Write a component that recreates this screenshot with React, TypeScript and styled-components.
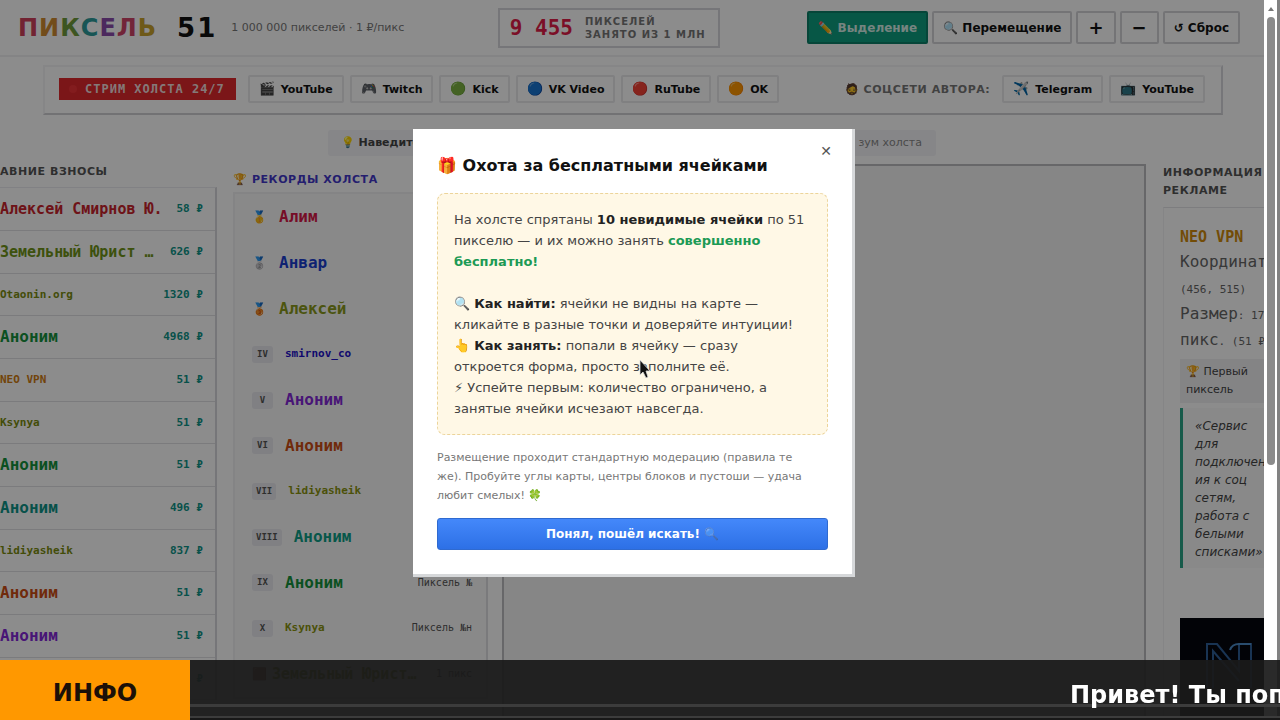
import React from 'react';
import styled, { createGlobalStyle, css } from 'styled-components';

const sans = `"DejaVu Sans", "Noto Sans", sans-serif`;
const mono = `"DejaVu Sans Mono", "Liberation Mono", monospace`;

const Global = createGlobalStyle`
  * { box-sizing: border-box; }
  html, body { margin: 0; height: 100%; overflow: hidden; }
  body { font-family: ${sans}; font-size: 12px; color: #111; background: #fff; }
  h1, h2, p, ul, ol { margin: 0; padding: 0; list-style: none; }
  button { font-family: inherit; cursor: pointer; }
`;

const Page = styled.div`
  height: 100vh;
  display: flex;
  overflow: hidden;
`;
const Content = styled.div`
  position: relative;
  flex: 1;
  min-width: 0;
  overflow: hidden;
`;

/* ---------- header ---------- */
const Header = styled.header`
  display: flex;
  align-items: center;
  justify-content: space-between;
  height: 57px;
  padding: 0 24px 0 18px;
  border-bottom: 2px solid #f0f0f2;
`;
const Brand = styled.div`
  display: flex;
  align-items: center;
  flex: 0 0 392px;
`;
const Logo = styled.h1`
  font-size: 24px;
  line-height: 28px;
  letter-spacing: 1px;
  margin-right: 20px;
`;
const Letter = styled.span<{ $c: string }>`
  color: ${p => p.$c};
`;
const LogoNumber = styled.span`
  font-size: 26px;
  line-height: 28px;
  font-weight: 700;
  letter-spacing: 2px;
  margin-right: 14px;
  color: #111;
`;
const Slogan = styled.span`
  font-size: 11px;
  color: #777;
  white-space: nowrap;
`;
const Counter = styled.div`
  display: flex;
  align-items: center;
  gap: 12px;
  height: 40px;
  padding: 0 12px 0 10px;
  border: 2px solid #d8d8dc;
  font-size: 10px;
  line-height: 13px;
  font-weight: 700;
  letter-spacing: 1px;
  color: #777;
  white-space: nowrap;
`;
const CounterValue = styled.strong`
  font: 700 21px/24px ${mono};
  letter-spacing: 0;
  color: #e11d48;
`;
const Tools = styled.div`
  display: flex;
  gap: 4px;
`;
const ToolButton = styled.button<{ $active?: boolean; $icon?: boolean }>`
  height: 33px;
  padding: 0 ${p => (p.$icon ? 10 : 9)}px;
  border: 2px solid #d4d4d8;
  border-radius: 2px;
  background: #fff;
  color: #111;
  font-size: ${p => (p.$icon ? 18 : 12)}px;
  font-weight: 700;
  line-height: 16px;
  white-space: nowrap;
  ${p => p.$active && css`
    background: #0d9f80;
    border-color: #0b8068;
    color: #d8f0ea;
  `}
`;

/* ---------- links strip ---------- */
const Strip = styled.section`
  display: flex;
  align-items: center;
  justify-content: space-between;
  height: 50px;
  margin: 8px 41px 0 43px;
  padding: 0 16px 2px 14px;
  border: 2px solid #f4f4f6;
  border-right-color: #d8d8dc;
  border-bottom-color: #cfcfd3;
`;
const LinkGroup = styled.nav`
  display: flex;
  align-items: center;
  gap: 6px;
`;
const LiveBadge = styled.strong`
  display: flex;
  align-items: center;
  gap: 8px;
  height: 22px;
  margin-right: 6px;
  padding: 0 11px 0 10px;
  background: #e0292d;
  color: #f0dcdc;
  font: 700 12px/16px ${mono};
  letter-spacing: 1px;
`;
const LiveDot = styled.i`
  width: 8px;
  height: 8px;
  border-radius: 4px;
  background: #ee3438;
`;
const ChipLink = styled.a`
  display: flex;
  align-items: center;
  gap: 6px;
  height: 28px;
  padding: 0 9px;
  border: 2px solid #e9e9ec;
  border-radius: 2px;
  color: #111;
  font-size: 11px;
  font-weight: 700;
  text-decoration: none;
  white-space: nowrap;
`;
const Emoji = styled.span`
  font-size: 13px;
  line-height: 16px;
`;
const StripLabel = styled.span`
  margin-right: 6px;
  color: #777;
  font-size: 11px;
  font-weight: 700;
  letter-spacing: 0.05em;
  white-space: nowrap;
`;

/* ---------- hint ---------- */
const Hint = styled.p`
  display: flex;
  justify-content: space-between;
  width: 608px;
  height: 26px;
  margin: 15px auto 0;
  padding: 0 14px 0 13px;
  background: #f4f4f8;
  border-radius: 3px;
  color: #888;
  font-size: 11px;
  line-height: 26px;
  b { color: #444; }
`;

/* ---------- main columns ---------- */
const Columns = styled.main`
  display: flex;
  align-items: flex-start;
  margin-top: 8px;
`;
const Donations = styled.section`
  flex: 0 0 217px;
`;
const ColumnTitle = styled.h2<{ $blue?: boolean }>`
  height: ${p => (p.$blue ? 28 : 23)}px;
  color: ${p => (p.$blue ? '#4338ca' : '#555')};
  font-size: 11px;
  line-height: ${p => (p.$blue ? 32 : 16)}px;
  letter-spacing: 0.05em;
  white-space: nowrap;
`;
const DonationList = styled.ul`
  border-right: 2px solid #d8d8dc;
  border-top: 1px solid #ececf0;
`;
const DonationRow = styled.li`
  display: flex;
  align-items: center;
  justify-content: space-between;
  height: 43px;
  padding-right: 12px;
  border-bottom: 1px solid #e0e0e4;
  &:nth-child(3n) { height: 42px; }
`;
const Name = styled.span<{ $c: string; $size: number }>`
  color: ${p => p.$c};
  font: 700 ${p => p.$size}px/20px ${mono};
  white-space: pre;
`;
const Sum = styled.span`
  color: #0d9488;
  font: 700 11px/20px ${mono};
`;
const Records = styled.section`
  flex: 0 0 255px;
  margin-left: 16px;
`;
const RecordList = styled.ol`
  padding: 0 14px 0 17px;
  background: #fafafa;
  border: 2px solid #f0f0f3;
  border-right-color: #dedee2;
`;
const RecordRow = styled.li`
  display: flex;
  align-items: center;
  height: 46px;
  &:nth-child(3n) { height: 45px; }
`;
const Medal = styled.span<{ $wide: boolean }>`
  width: ${p => (p.$wide ? 27 : 20)}px;
  font-size: 12px;
  line-height: 20px;
`;
const Rank = styled.span`
  margin-right: 12px;
  min-width: 21px;
  padding: 0 4px;
  border-radius: 3px;
  background: #e9e9ee;
  color: #555;
  text-align: center;
  font: 700 9px/17px ${mono};
`;
const RecordNote = styled.span`
  margin-left: auto;
  color: #555;
  font: 400 10px/16px ${mono};
  white-space: nowrap;
`;
const CanvasBox = styled.div`
  flex: 1;
  min-width: 0;
  height: 640px;
  margin-left: 14px;
  border: 2px solid #bcbcc0;
  background: #f4f4f4;
`;
const Info = styled.aside`
  flex: 0 0 101px;
  margin-left: 17px;
  overflow: hidden;
`;
const InfoTitle = styled.h2`
  width: 140px;
  height: 43px;
  color: #555;
  font-size: 11px;
  line-height: 18px;
  letter-spacing: 0.05em;
`;
const InfoCard = styled.article`
  width: 130px;
  padding: 17px 0 0 16px;
  border-top: 1px solid #e4e4e8;
  border-left: 1px solid #f2f2f5;
`;
const InfoName = styled.h2`
  color: #d08a0c;
  font: 700 15px/24px ${mono};
`;
const InfoText = styled.p`
  color: #666;
  font: 400 16px/26px ${mono};
  white-space: pre;
`;
const Small = styled.span`
  font-size: 11px;
  line-height: 16px;
`;
const FirstBadge = styled.p`
  margin-top: 6px;
  padding: 4px 6px;
  background: #f0f0f3;
  color: #444;
  font-size: 11px;
  line-height: 18px;
  white-space: pre;
`;
const Quote = styled.blockquote`
  margin: 5px 0 50px;
  padding: 9px 0 7px 12px;
  border-left: 3px solid #2aa587;
  background: #fafafa;
  color: #444;
  font-size: 12px;
  font-style: italic;
  line-height: 18px;
  white-space: pre;
`;
const Banner = styled.svg`
  display: block;
  width: 114px;
  height: 100px;
`;

/* ---------- scrollbar ---------- */
const ScrollTrack = styled.div`
  flex: 0 0 16px;
  padding: 0 2px 0 3px;
  background: #fff;
  border-right: 3px solid #828282;
`;
const ScrollArrow = styled.svg`
  display: block;
  width: 8px;
  height: 17px;
`;
const ScrollThumb = styled.div`
  height: 448px;
  border-radius: 4px;
  background: #8b8b8b;
`;

/* ---------- dialog ---------- */
const Overlay = styled.div`
  position: absolute;
  inset: 0;
  background: rgba(0, 0, 0, 0.45);
`;
const DialogLayer = styled.div`
  position: fixed;
  inset: 0;
  display: flex;
  align-items: center;
  justify-content: center;
  padding: 0 12px 14px 0;
`;
const Dialog = styled.section`
  position: relative;
  width: 442px;
  padding: 24px;
  background: #fff;
  border: solid #d6d8da;
  border-width: 0 3px 3px 0;
`;
const Close = styled.button`
  position: absolute;
  top: 10px;
  right: 14px;
  width: 24px;
  height: 24px;
  padding: 0;
  border: 0;
  background: none;
  color: #555;
  font-size: 14px;
  line-height: 22px;
`;
const DialogTitle = styled.h2`
  color: #111;
  font-size: 16px;
  line-height: 26px;
  white-space: nowrap;
`;
const Rules = styled.div`
  margin-top: 14px;
  padding: 15px 16px;
  border: 1px dashed #ecd49a;
  border-radius: 8px;
  background: #fff8e6;
  color: #444;
  font-size: 13px;
  line-height: 21px;
  white-space: nowrap;
  b { color: #222; }
`;
const Free = styled.strong`
  color: #1c9a55;
`;
const Note = styled.p`
  margin-top: 13px;
  color: #777;
  font-size: 11px;
  line-height: 19px;
  white-space: nowrap;
`;
const Submit = styled.button`
  display: block;
  width: 100%;
  height: 32px;
  margin-top: 13px;
  border: 1px solid #2f6ad0;
  border-radius: 3px;
  background: linear-gradient(#4488fa, #2d70e6);
  color: #fff;
  font-size: 12px;
  font-weight: 700;
`;
const Faint = styled.span`
  opacity: 0.4;
`;

/* ---------- ticker ---------- */
const Ticker = styled.footer`
  position: fixed;
  left: 0;
  right: 0;
  bottom: 0;
  display: flex;
  height: 60px;
  background: rgba(26, 26, 26, 0.93);
  color: #fff;
  font-size: 24px;
  font-weight: 700;
`;
const TickerTag = styled.strong`
  flex: 0 0 190px;
  background: #ff9800;
  color: #1c1008;
  line-height: 66px;
  text-align: center;
`;
const TickerTrack = styled.div`
  flex: 1;
  overflow: hidden;
  padding-left: 880px;
  line-height: 70px;
  white-space: nowrap;
  background: linear-gradient(
    transparent 44px, #3c3c3c 44px, #3c3c3c 47px, transparent 47px,
    transparent 56px, #3c3c3c 56px, #3c3c3c 58px, #181818 58px
  );
`;
const Pointer = styled.svg`
  position: fixed;
  left: 639px;
  top: 359px;
  width: 12px;
  height: 19px;
`;

const logo: [string, string][] = [
  ['П', '#d0405c'], ['И', '#cf8a30'], ['К', '#6f9c3c'], ['С', '#2d9c9c'],
  ['Е', '#8a4bab'], ['Л', '#d04468'], ['Ь', '#c9a22c'],
];

const donations: [string, string, string, number][] = [
  ['Алексей Смирнов Ю.', '58 ₽', '#c9242c', 15],
  ['Земельный Юрист …', '626 ₽', '#6f9418', 15],
  ['Otaonin.org', '1320 ₽', '#7a8c10', 11],
  ['Аноним', '4968 ₽', '#15923c', 16],
  ['NEO VPN', '51 ₽', '#cf7c12', 11],
  ['Ksynya', '51 ₽', '#7a8c10', 11],
  ['Аноним', '51 ₽', '#15923c', 16],
  ['Аноним', '496 ₽', '#0d9488', 16],
  ['lidiyasheik', '837 ₽', '#7a8c10', 11],
  ['Аноним', '51 ₽', '#cc4e14', 16],
  ['Аноним', '51 ₽', '#8428d8', 16],
  ['Аноним', '51 ₽', '#15923c', 16],
];

const records: [string, string, string, number, string][] = [
  ['🥇', 'Алим', '#d81848', 16, ''],
  ['🥈', 'Анвар', '#1c3fd0', 16, ''],
  ['🥉', 'Алексей', '#8a9a1c', 16, ''],
  ['IV', 'smirnov_co', '#1c10c8', 11, ''],
  ['V', 'Аноним', '#8428d8', 16, ''],
  ['VI', 'Аноним', '#cc4e14', 16, ''],
  ['VII', 'lidiyasheik', '#8a9410', 11, ''],
  ['VIII', 'Аноним', '#0d9f88', 16, ''],
  ['IX', 'Аноним', '#15923c', 16, 'Пиксель №'],
  ['X', 'Ksynya', '#8a9410', 11, 'Пиксель №н'],
  ['🟫', 'Земельный Юрист…', '#8a9410', 15, '1 пикс'],
];

const streams: [string, string][] = [
  ['🎬', 'YouTube'], ['🎮', 'Twitch'], ['🟢', 'Kick'], ['🔵', 'VK Video'], ['🔴', 'RuTube'], ['🟠', 'OK'],
];

function Chip({ icon, label }: { icon: string; label: string }) {
  return <ChipLink href="#"><Emoji>{icon}</Emoji>{label}</ChipLink>;
}

export default function App() {
  return (
    <>
      <Global />
      <Page>
        <Content>
          <Header>
            <Brand>
              <Logo>{logo.map(([ch, c], i) => <Letter key={i} $c={c}>{ch}</Letter>)}</Logo>
              <LogoNumber>51</LogoNumber>
              <Slogan>1 000 000 пикселей · 1 ₽/пикс</Slogan>
            </Brand>
            <Counter>
              <CounterValue>9 455</CounterValue>
              <span>ПИКСЕЛЕЙ<br />ЗАНЯТО ИЗ 1 МЛН</span>
            </Counter>
            <Tools>
              <ToolButton $active>✏️ Выделение</ToolButton>
              <ToolButton>🔍 Перемещение</ToolButton>
              <ToolButton $icon aria-label="Приблизить">+</ToolButton>
              <ToolButton $icon aria-label="Отдалить">−</ToolButton>
              <ToolButton>↺ Сброс</ToolButton>
            </Tools>
          </Header>

          <Strip>
            <LinkGroup>
              <LiveBadge><LiveDot />СТРИМ ХОЛСТА 24/7</LiveBadge>
              {streams.map(([icon, label]) => <Chip key={label} icon={icon} label={label} />)}
            </LinkGroup>
            <LinkGroup>
              <StripLabel>🧔 СОЦСЕТИ АВТОРА:</StripLabel>
              <Chip icon="✈️" label="Telegram" />
              <Chip icon="📺" label="YouTube" />
            </LinkGroup>
          </Strip>

          <Hint><span>💡 <b>Наведите</b></span><span>зум холста</span></Hint>

          <Columns>
            <Donations>
              <ColumnTitle>АВНИЕ ВЗНОСЫ</ColumnTitle>
              <DonationList>
                {donations.map(([name, sum, c, size], i) => (
                  <DonationRow key={i}><Name $c={c} $size={size}>{name}</Name><Sum>{sum}</Sum></DonationRow>
                ))}
              </DonationList>
            </Donations>

            <Records>
              <ColumnTitle $blue>🏆 РЕКОРДЫ ХОЛСТА</ColumnTitle>
              <RecordList>
                {records.map(([rank, name, c, size, note], i) => (
                  <RecordRow key={i}>
                    {i < 3 || i > 9 ? <Medal $wide={i < 3}>{rank}</Medal> : <Rank>{rank}</Rank>}
                    <Name $c={c} $size={size}>{name}</Name>
                    {note && <RecordNote>{note}</RecordNote>}
                  </RecordRow>
                ))}
              </RecordList>
            </Records>

            <CanvasBox />

            <Info>
              <InfoTitle>ИНФОРМАЦИЯ<br />РЕКЛАМЕ</InfoTitle>
              <InfoCard>
                <InfoName>NEO VPN</InfoName>
                <InfoText>
                  Координат<br />
                  <Small>(456, 515)</Small><br />
                  Размер<Small>: 17</Small><br />
                  пикс<Small>. (51 ₽</Small>
                </InfoText>
                <FirstBadge>🏆 Первый<br />пиксель</FirstBadge>
                <Quote>
                  «Сервис<br />для<br />подключен<br />ия к соц<br />сетям,<br />работа с<br />белыми<br />списками»
                </Quote>
                <Banner viewBox="0 0 114 100">
                  <rect width="114" height="100" fill="#04060e" />
                  <path d="M27 70V26h10l22 27V26h12v44M33 70V33l26 30" fill="none" stroke="#2e5f98" strokeWidth="2" />
                  <path d="M50 32q2-6 9-6h12" fill="none" stroke="#4d8cc8" strokeWidth="2" />
                </Banner>
              </InfoCard>
            </Info>
          </Columns>
          <Overlay />
        </Content>
        <ScrollTrack>
          <ScrollArrow viewBox="0 0 8 17"><path d="M1 11l3-4 3 4z" fill="#777" /></ScrollArrow>
          <ScrollThumb />
        </ScrollTrack>
      </Page>

      <DialogLayer>
        <Dialog role="dialog" aria-labelledby="hunt-title">
          <Close aria-label="Закрыть">✕</Close>
          <DialogTitle id="hunt-title">🎁 Охота за бесплатными ячейками</DialogTitle>
          <Rules>
            <p>На холсте спрятаны <b>10 невидимые ячейки</b> по 51<br />
              пикселю — и их можно занять <Free>совершенно<br />бесплатно!</Free></p>
            <br />
            <p>🔍 <b>Как найти:</b> ячейки не видны на карте —<br />кликайте в разные точки и доверяйте интуиции!</p>
            <p>👆 <b>Как занять:</b> попали в ячейку — сразу<br />откроется форма, просто заполните её.</p>
            <p>⚡ Успейте первым: количество ограничено, а<br />занятые ячейки исчезают навсегда.</p>
          </Rules>
          <Note>
            Размещение проходит стандартную модерацию (правила те<br />
            же). Пробуйте углы карты, центры блоков и пустоши — удача<br />
            любит смелых! 🍀
          </Note>
          <Submit>Понял, пошёл искать! <Faint>🔍</Faint></Submit>
        </Dialog>
      </DialogLayer>

      <Ticker>
        <TickerTag>ИНФО</TickerTag>
        <TickerTrack>Привет! Ты поп</TickerTrack>
      </Ticker>

      <Pointer viewBox="0 0 12 19">
        <path d="M1 1v15l3-3 3 6 2-1-2-6h4z" fill="#111" stroke="#ddd" strokeWidth="0.8" />
      </Pointer>
    </>
  );
}
